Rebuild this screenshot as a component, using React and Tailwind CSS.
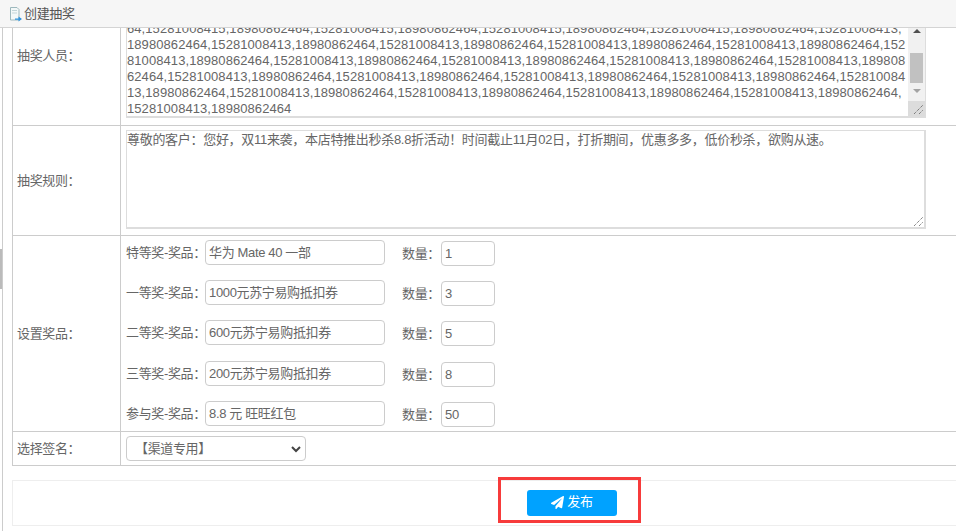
import React from "react";
import { FaPaperPlane } from "react-icons/fa";

const lines = [
  "64,15281008415,18980862464,15281008415,18980862464,15281008415,18980862464,15281008415,18980862464,15281008413,",
  "18980862464,15281008413,18980862464,15281008413,18980862464,15281008413,18980862464,15281008413,18980862464,152",
  "81008413,18980862464,15281008413,18980862464,15281008413,18980862464,15281008413,18980862464,15281008413,189808",
  "62464,15281008413,18980862464,15281008413,18980862464,15281008413,18980862464,15281008413,18980862464,152810084",
  "13,18980862464,15281008413,18980862464,15281008413,18980862464,15281008413,18980862464,15281008413,18980862464,",
  "15281008413,18980862464",
];

const prizes = [
  { label: "特等奖-奖品：", value: "华为 Mate 40 一部", qty: "1", gap: "mb-[15px]" },
  { label: "一等奖-奖品：", value: "1000元苏宁易购抵扣券", qty: "3", gap: "mb-[15px]" },
  { label: "二等奖-奖品：", value: "600元苏宁易购抵扣券", qty: "5", gap: "mb-[16px]" },
  { label: "三等奖-奖品：", value: "200元苏宁易购抵扣券", qty: "8", gap: "mb-[15px]" },
  { label: "参与奖-奖品：", value: "8.8 元 旺旺红包", qty: "50", gap: "mb-0" },
];

function Grip({ className }) {
  return (
    <svg className={className} width="11" height="11" viewBox="0 0 11 11">
      <path d="M1 10 L10 1 M6 10 L10 6" stroke="#555" strokeWidth="1" strokeDasharray="1 1" fill="none" />
    </svg>
  );
}

function Row({ label, labelClass = "", className = "", children }) {
  return (
    <div className={`flex border-l border-b border-[#ccc] ${className}`}>
      <div className={`w-[108px] shrink-0 flex items-center pl-[4px] border-r border-[#ccc] ${labelClass}`}>{label}</div>
      <div className="flex-1 min-w-0 pl-[5px]">{children}</div>
    </div>
  );
}

export default function App() {
  return (
    <div className="w-[956px] h-[531px] overflow-hidden relative bg-white flex flex-col text-[13px] tracking-[-0.35px] text-[#666] font-['Liberation_Sans','Noto_Sans_CJK_SC',sans-serif]">
      <header className="h-[28px] shrink-0 flex items-center bg-[#f6f6f6] border-b border-[#d4d4d4] pl-[9px] gap-[2px]">
        <svg width="13" height="16" viewBox="0 0 13 16" className="shrink-0">
          <path d="M1.5 1.5 H8 L10 3.5 V14 H1.5 Z" fill="#f3f8f8" stroke="#9db8bd" />
          <path d="M3 4.5 H8 M3 7 H8" stroke="#c3d5d8" />
          <path d="M6 12.5 H9.5 V10.5 L13 13 L9.5 15.5 V13.8 H6 Z" fill="#2f93dc" />
        </svg>
        <span className="text-[#555]">创建抽奖</span>
      </header>

      <main className="flex-1 min-h-0 ml-[2px] border-l border-[#ccc] pl-[9px] overflow-hidden">
        <div className="w-[960px]">
          <Row label="抽奖人员：" labelClass="pb-[41px]" className="h-[98px]">
            <div className="w-[800px] h-[90px] border-x border-b-2 border-[#ddd] flex overflow-hidden">
              <div className="flex-1 min-w-0 overflow-hidden -mt-[7px] whitespace-pre leading-[16px] tracking-[0.075px]">
                {lines.map((line, index) => (
                  <div key={index}>{line}</div>
                ))}
              </div>
              <div className="w-[17px] shrink-0 flex flex-col bg-[#f1f1f1]">
                <div className="h-[73px] flex flex-col items-center">
                  <div className="mt-[1px] w-0 h-0 border-x-[4px] border-x-transparent border-b-[4px] border-b-[#505050]" />
                  <div className="mt-[20px] w-[13px] h-[30px] bg-[#c1c1c1]" />
                  <div className="mt-[6px] w-0 h-0 border-x-[4px] border-x-transparent border-t-[4px] border-t-[#a3a3a3]" />
                </div>
                <div className="flex-1 bg-[#dcdcdc] flex items-end justify-end">
                  <Grip className="mb-[1px] mr-[1px]" />
                </div>
              </div>
            </div>
          </Row>

          <Row label="抽奖规则：" className="h-[110px]">
            <div className="relative w-[800px] h-[99px] mt-[4px] border-2 border-[#ddd] border-l border-t pt-[1px] leading-[16px] tracking-[-0.3px]">
              尊敬的客户：您好，双11来袭，本店特推出秒杀8.8折活动！时间截止11月02日，打折期间，优惠多多，低价秒杀，欲购从速。
              <Grip className="absolute right-0 bottom-0" />
            </div>
          </Row>

          <Row label="设置奖品：" className="h-[196px]">
            <div className="pt-[4px] flex flex-col">
              {prizes.map((prize) => (
                <div key={prize.label} className={`flex items-start h-[25px] ${prize.gap}`}>
                  <span className="w-[79px] shrink-0 leading-[25px] whitespace-nowrap">{prize.label}</span>
                  <div className="w-[180px] h-[25px] shrink-0 border border-[#ccc] rounded-[4px] pl-[3px] leading-[23px] whitespace-nowrap overflow-hidden">{prize.value}</div>
                  <span className="ml-[17px] w-[39px] shrink-0 mt-[1px] leading-[25px] whitespace-nowrap">数量：</span>
                  <div className="mt-[1px] w-[54px] h-[25px] shrink-0 border border-[#ccc] rounded-[4px] pl-[3px] leading-[23px]">{prize.qty}</div>
                </div>
              ))}
            </div>
          </Row>

          <Row label="选择签名：" className="h-[34px]">
            <div className="mt-[4px] w-[180px] h-[25px] border border-[#ccc] rounded-[4px] flex items-center justify-between pl-[8px] pr-[4px]">
              <span>【渠道专用】</span>
              <svg width="10" height="10" viewBox="0 0 10 10">
                <path d="M1 3 L5 7 L9 3" stroke="#444" strokeWidth="2" fill="none" />
              </svg>
            </div>
          </Row>

          <div className="mt-[14px] h-[46px] border border-r-0 border-[#eee] flex justify-start pl-[514px] pt-[9px]">
            <button className="w-[90px] h-[26px] pb-[2px] rounded-[3px] bg-[#00a2ff] text-white flex items-center justify-center gap-[3px]">
              <FaPaperPlane size={13} />
              <span>发布</span>
            </button>
          </div>
        </div>
      </main>

      <div className="absolute left-0 top-[249px] w-[2px] h-[40px] bg-[#bbb]" />
      <div className="absolute left-[498px] top-[477px] w-[143px] h-[46px] border-[3px] border-[#f73b3b]" />
    </div>
  );
}
